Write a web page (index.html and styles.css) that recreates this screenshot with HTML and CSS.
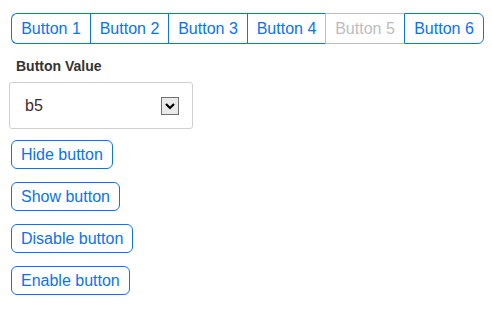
FILE: index.html
```html
<!doctype html>
<html lang="en">
<head>
  <meta charset="utf-8">
  <title>Button group</title>
  <link rel="stylesheet" href="styles.css">
</head>
<body>
  <div class="btn-group">
    <button class="btn">Button 1</button>
    <button class="btn">Button 2</button>
    <button class="btn">Button 3</button>
    <button class="btn">Button 4</button>
    <button class="btn" disabled>Button 5</button>
    <button class="btn">Button 6</button>
  </div>

  <label class="field-label">Button Value</label>
  <div class="select-box">
    <span class="select-value">b5</span>
    <svg class="select-arrow" width="18" height="18" viewBox="0 0 18 18">
      <rect x="0.5" y="0.5" width="17" height="17" fill="#eaeaea" stroke="#707070"/>
      <path d="M5 7 L9 11 L13 7" fill="none" stroke="#000" stroke-width="2.2"/>
    </svg>
  </div>

  <div class="actions">
    <button class="btn single">Hide button</button>
    <button class="btn single">Show button</button>
    <button class="btn single">Disable button</button>
    <button class="btn single">Enable button</button>
  </div>
</body>
</html>
```

FILE: styles.css
```css
:root{ --primary:#0a72f5; --muted:#bdbdbd; --text:#333; }
*{ box-sizing:border-box; }
body{ margin:0; padding:13px 8px 0 11px; font-family:"Liberation Sans", Arial, sans-serif; color:var(--text); background:#fff; display:flex; flex-direction:column; align-items:flex-start; }
.btn{ font-family:inherit; font-size:16px; line-height:19px; padding:5px 9px; background:#fff; color:var(--primary); border:1px solid var(--primary); cursor:pointer; }
.btn:disabled{ color:var(--muted); border-color:var(--muted); cursor:default; }
.btn-group{ display:flex; }
.btn-group .btn{ border-radius:0; border-right:none; width:79px; padding:5px 0; }
.btn-group .btn:nth-child(even){ width:78px; }
.btn-group .btn:first-child{ border-radius:6px 0 0 6px; }
.btn-group .btn:last-child{ border-right:1px solid var(--primary); border-radius:0 6px 6px 0; width:80px; }
.btn-group .btn:disabled + .btn{ border-left-color:var(--primary); }
.field-label{ display:block; margin:14px 0 0 5px; font-size:14px; line-height:16px; font-weight:bold; color:#333; }
.select-box{ margin:8px 0 0 -2px; width:184px; height:47px; border:1px solid #cfcfcf; border-radius:3px; display:flex; align-items:center; justify-content:space-between; padding:0 13px 0 15px; }
.select-value{ font-size:16px; color:#3b2b2b; }
.actions{ display:flex; flex-direction:column; align-items:flex-start; gap:13px; margin-top:11px; }
.btn.single{ padding:4px 9px; border-radius:6px; }
```
